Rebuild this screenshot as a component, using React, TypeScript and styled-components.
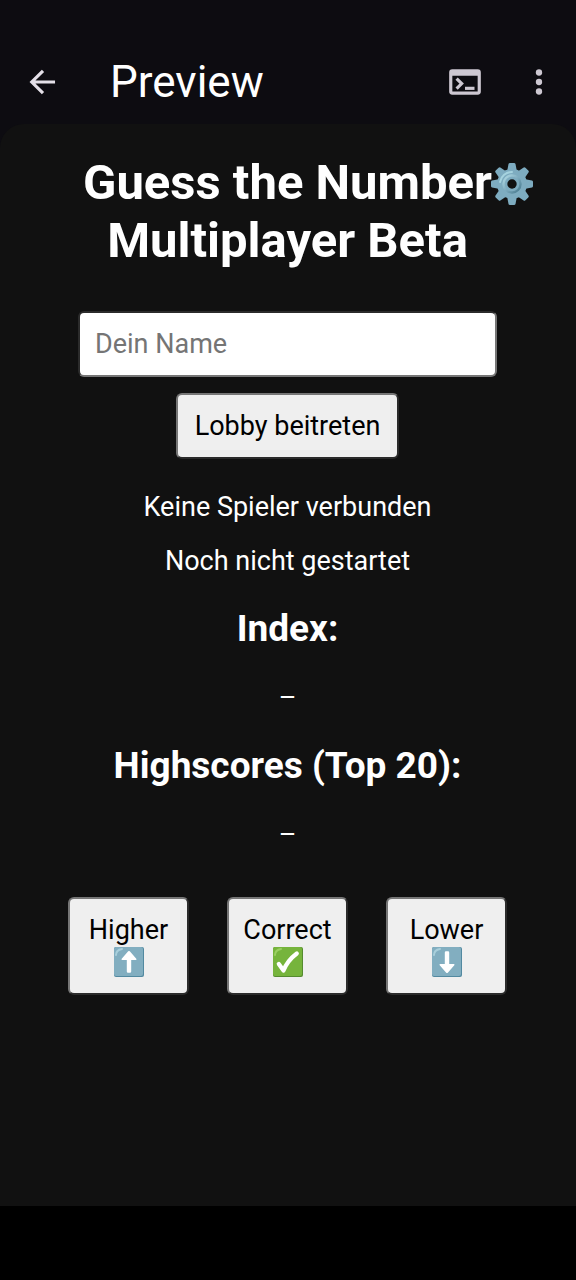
import React from "react";
import styled, { createGlobalStyle } from "styled-components";

const GlobalStyle = createGlobalStyle`
  * { box-sizing: border-box; }
  body {
    margin: 0;
    background: #000;
    color: #fff;
    font-family: Roboto, "Liberation Sans", sans-serif;
  }
`;

const Screen = styled.div`
  display: flex;
  flex-direction: column;
  min-height: 100vh;
  padding-bottom: 74px;
  background: linear-gradient(#0d0c11 0 160px, #000 160px);
`;

const AppBar = styled.header`
  display: flex;
  align-items: center;
  height: 124px;
  padding: 40px 18px 0 24px;
`;

const BarTitle = styled.span`
  flex: 1;
  margin-left: 48px;
  font-size: 44px;
  line-height: 52px;
`;

const IconButton = styled.button`
  display: flex;
  padding: 0;
  border: 0;
  background: none;
  color: #cdc8d2;
  cursor: pointer;
`;

const BarActions = styled.div`
  display: flex;
  align-items: center;
  gap: 36px;
`;

const Page = styled.main`
  position: relative;
  flex: 1;
  display: flex;
  flex-direction: column;
  align-items: center;
  padding: 30px 65px 48px 64px;
  border-radius: 24px 24px 0 0;
  background: #111;
  text-align: center;
`;

const Settings = styled(IconButton)`
  position: absolute;
  top: 38px;
  right: 42px;
`;

const Title = styled.h1`
  margin: 0 0 41px;
  font-size: 49px;
  line-height: 58px;
`;

const JoinForm = styled.form`
  display: flex;
  flex-direction: column;
  align-items: center;
  gap: 16px;
  width: 100%;
  padding: 0 14px;
  margin-bottom: 32px;
`;

const NameInput = styled.input`
  width: 100%;
  height: 66px;
  padding: 0 15px;
  border: 2px solid;
  border-color: #2b2b2b #767676 #767676 #2b2b2b;
  border-radius: 6px;
  background: #fff;
  color: #000;
  font: inherit;
  font-size: 27px;
  &::placeholder { color: #757575; opacity: 1; }
`;

const Button = styled.button`
  padding: 15px 17px;
  border: 2px solid;
  border-color: #767676 #2b2b2b #2b2b2b #767676;
  border-radius: 6px;
  background: #efefef;
  color: #000;
  font: inherit;
  font-size: 27px;
  line-height: 32px;
  cursor: pointer;
`;

const Text = styled.p`
  margin: 0 0 22px;
  font-size: 27px;
  line-height: 32px;
`;

const Heading = styled.h2`
  margin: 8px 0 31px;
  font-size: 37px;
  line-height: 44px;
`;

const Guesses = styled.div`
  display: flex;
  justify-content: center;
  gap: 38px;
  margin-top: 24px;
`;

const GuessButton = styled(Button)`
  display: flex;
  flex-direction: column;
  align-items: center;
  width: 121px;
  height: 98px;
  padding: 15px 0;
`;

function Gear() {
  return (
    <svg width="44" height="44" viewBox="0 0 44 44" aria-hidden="true">
      <defs>
        <linearGradient id="ring" x1="0" y1="0" x2="1" y2="1">
          <stop offset="0" stopColor="#b3dce6" />
          <stop offset=".5" stopColor="#7eabbe" />
          <stop offset="1" stopColor="#45778b" />
        </linearGradient>
      </defs>
      <g fill="#7eacc0">
        {[0, 45, 90, 135].map((a) => (
          <path key={a} d="M18.5 2Q18.7 1 20 1h4q1.3 0 1.5 1l1.5 8v24l-1.5 8q-.2 1-1.5 1h-4q-1.3 0-1.5-1L17 34V10z" transform={`rotate(${a} 22 22)`} />
        ))}
        <circle cx="22" cy="22" r="15" />
      </g>
      <path d="M10 20a12 12 0 0 1 12-10" fill="none" stroke="#a6d3df" strokeWidth="2" strokeLinecap="round" />
      <circle cx="22" cy="22" r="8.5" fill="none" stroke="url(#ring)" strokeWidth="2.4" />
      <circle cx="22" cy="22" r="4.7" fill="#111" />
    </svg>
  );
}

function Tile({ kind }: { kind: "up" | "down" | "check" }) {
  const check = kind === "check";
  return (
    <svg width="32" height="32" viewBox="0 0 32 32" aria-hidden="true">
      <rect x="1" y="1" width="30" height="30" rx="2" fill={check ? "#558b2f" : "#5289a0"} />
      <rect x="1" y="1" width="29" height="29" rx="2" fill={check ? "#76b43c" : "#82aec0"} />
      <path d="M3 9Q3 4 9 3" fill="none" stroke={check ? "#9bcf62" : "#a9cfdb"} strokeWidth="2" strokeLinecap="round" />
      {check ? (
        <path d="M6.8 18L11.5 24.5Q15.5 14.5 24.8 7.5" fill="none" stroke="#fff" strokeWidth="4.2" strokeLinecap="round" strokeLinejoin="round" />
      ) : (
        <path
          d="M15.2 5.3q.8-.7 1.6 0l6.5 7.5q.8 1.2-.7 1.2h-4.4v11.5q0 1.2-1.2 1.2h-2q-1.2 0-1.2-1.2V14H9.4q-1.5 0-.7-1.2z"
          fill="#fff"
          transform={kind === "down" ? "rotate(180 16 16)" : undefined}
        />
      )}
    </svg>
  );
}

export default function App() {
  return (
    <>
      <GlobalStyle />
      <Screen>
        <AppBar>
          <IconButton aria-label="Back">
            <svg width="38" height="38" viewBox="0 0 24 24" fill="none" stroke="#e4e0e8" strokeWidth="2" aria-hidden="true">
              <path d="M19.6 12H5.4M12 4.9L4.9 12l7.1 7.1" />
            </svg>
          </IconButton>
          <BarTitle>Preview</BarTitle>
          <BarActions>
            <IconButton aria-label="Console">
              <svg width="38" height="38" viewBox="0 0 24 24" aria-hidden="true">
                <path fill="currentColor" fillRule="evenodd" d="M4 4h16a2 2 0 0 1 2 2v12a2 2 0 0 1-2 2H4a2 2 0 0 1-2-2V6a2 2 0 0 1 2-2zm0 4v10h16V8z" />
                <path d="M6.7 9.8L9.9 13l-3.2 3.2" fill="none" stroke="currentColor" strokeWidth="2" />
                <path d="M12 16h6" stroke="currentColor" strokeWidth="2" />
              </svg>
            </IconButton>
            <IconButton aria-label="More options">
              <svg width="38" height="38" viewBox="0 0 24 24" fill="currentColor" aria-hidden="true">
                <circle cx="12" cy="6" r="2" />
                <circle cx="12" cy="12" r="2" />
                <circle cx="12" cy="18" r="2" />
              </svg>
            </IconButton>
          </BarActions>
        </AppBar>
        <Page>
          <Settings aria-label="Einstellungen"><Gear /></Settings>
          <Title>Guess the Number<br />Multiplayer Beta</Title>
          <JoinForm onSubmit={(e) => e.preventDefault()}>
            <NameInput aria-label="Dein Name" placeholder="Dein Name" />
            <Button type="submit">Lobby beitreten</Button>
          </JoinForm>
          <Text>Keine Spieler verbunden</Text>
          <Text>Noch nicht gestartet</Text>
          <Heading>Index:</Heading>
          <Text>–</Text>
          <Heading>Highscores (Top 20):</Heading>
          <Text>–</Text>
          <Guesses>
            <GuessButton>Higher<Tile kind="up" /></GuessButton>
            <GuessButton>Correct<Tile kind="check" /></GuessButton>
            <GuessButton>Lower<Tile kind="down" /></GuessButton>
          </Guesses>
        </Page>
      </Screen>
    </>
  );
}
